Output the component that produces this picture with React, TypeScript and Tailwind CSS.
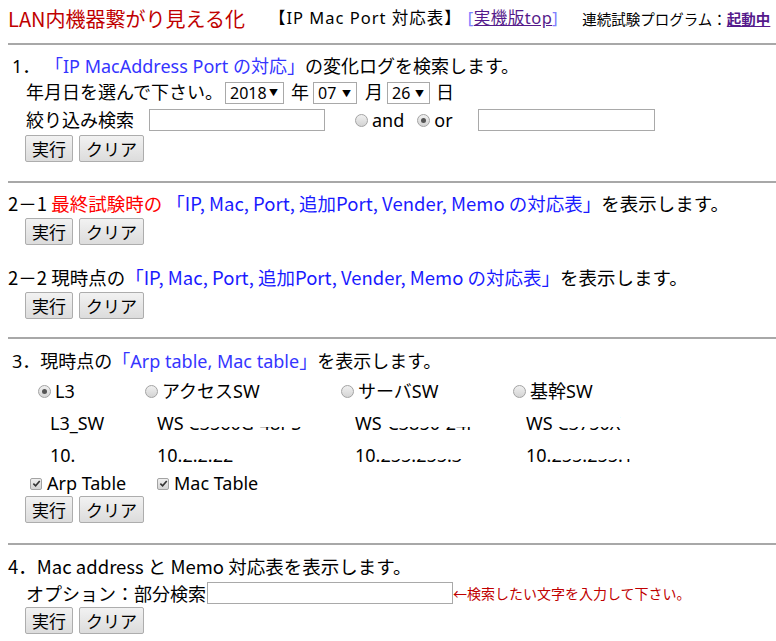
import type { ReactNode } from 'react'

const font = { fontFamily: '"Noto Sans", "Noto Sans CJK JP", sans-serif' }
const narrow = { fontFamily: '"Noto Sans CJK JP", sans-serif' }

function Btn({ children }: { children: ReactNode }) {
  return (
    <button
      type="button"
      className="h-[27px] rounded-[2px] border border-[#adadad] bg-gradient-to-b from-[#f2f2f2] to-[#dcdcdc] px-[6px] text-[17px] leading-none text-black"
      style={narrow}
    >
      {children}
    </button>
  )
}

function Buttons() {
  return (
    <div className="flex gap-[6px] pl-[25px]">
      <Btn>実行</Btn>
      <Btn>クリア</Btn>
    </div>
  )
}

function Radio({ checked = false }: { checked?: boolean }) {
  return (
    <span className="mr-[4px] inline-flex h-[13px] w-[13px] shrink-0 items-center justify-center rounded-full border border-[#a3a3a3] bg-gradient-to-b from-[#f0f0f0] to-[#d4d4d4]">
      {checked && <span className="h-[5px] w-[5px] rounded-full bg-[#555]" />}
    </span>
  )
}

function Check() {
  return (
    <span className="mr-[5px] inline-flex h-[12px] w-[12px] shrink-0 items-center justify-center rounded-[2px] border border-[#a3a3a3] bg-gradient-to-b from-[#f0f0f0] to-[#d4d4d4]">
      <svg viewBox="0 0 10 10" className="h-[9px] w-[9px]">
        <path d="M1.5 5.2 L4 7.6 L8.6 2.2" fill="none" stroke="#333" strokeWidth="1.8" />
      </svg>
    </span>
  )
}

function Select({ value, w }: { value: string; w: string }) {
  return (
    <span
      className={`inline-flex h-[22px] items-center justify-between border border-[#a9a9a9] bg-white pl-[4px] pr-[5px] text-[16px] leading-none ${w}`}
    >
      <span>{value}</span>
      <span className="text-[9px]">▼</span>
    </span>
  )
}

// masked cells: only the lower part of the hidden text shows
function Masked({ lead, rest }: { lead: string; rest: string }) {
  return (
    <span className="whitespace-nowrap">
      {lead}
      <span className="relative inline-block">
        {rest}
        <span className="absolute inset-x-0 top-0 h-[62%] bg-white" />
      </span>
    </span>
  )
}

function Hr() {
  return <div className="ml-[8px] h-[2px] bg-[#a8a8a8]" />
}

export default function App() {
  return (
    <div className="min-h-[641px] w-[776px] overflow-hidden bg-white text-[18px] text-black" style={font}>
      <div className="flex h-[37px] items-center whitespace-nowrap pl-[8px]">
        <span className="text-[20px] text-[#c00000]" style={narrow}>
          LAN内機器繋がり見える化
        </span>
        <span className="ml-[24px] text-[16.5px] tracking-[1px]">【IP Mac Port 対応表】</span>
        <span className="ml-[6px] text-[16.5px] tracking-[0.5px] text-[#8080ff]">
          [<span className="text-[#551a8b] underline">実機版top</span>]
        </span>
        <span className="ml-[24px] text-[14.5px]" style={narrow}>
          連続試験プログラム：<span className="font-bold text-[#551a8b] underline">起動中</span>
        </span>
      </div>
      <div className="pt-[6px]">
        <Hr />
      </div>

      <div className="pt-[8px] pb-[19px]">
        <div className="whitespace-nowrap pl-[12px] leading-[26px]">
          1． <span className="text-[#3535ff]">「IP MacAddress Port の対応」</span>の変化ログを検索します。
        </div>
        <div className="flex h-[27px] items-center whitespace-nowrap pl-[26px]">
          <span className="w-[199px]">年月日を選んで下さい。</span>
          <Select value="2018" w="w-[59px]" />
          <span className="ml-[7px]">年</span>
          <span className="ml-[4px]">
            <Select value="07" w="w-[44px]" />
          </span>
          <span className="ml-[8px]">月</span>
          <span className="ml-[4px]">
            <Select value="26" w="w-[43px]" />
          </span>
          <span className="ml-[6px]">日</span>
        </div>
        <div className="flex h-[28px] items-center whitespace-nowrap pl-[26px]">
          <span className="w-[123px]">絞り込み検索</span>
          <span className="h-[22px] w-[176px] border border-[#a9a9a9]" />
          <span className="ml-[30px] flex items-center">
            <Radio />
            and
          </span>
          <span className="ml-[13px] flex items-center">
            <Radio checked />
            or
          </span>
          <span className="ml-[25px] h-[22px] w-[177px] border border-[#a9a9a9]" />
        </div>
        <div className="pt-[1px]">
          <Buttons />
        </div>
      </div>
      <Hr />

      <div className="pt-[5px] pb-[18px]" style={narrow}>
        <div className="h-[30px] whitespace-nowrap pl-[8px] text-[18.5px] leading-[30px]">
          2－1 <span className="text-[#ff0000]">最終試験時の</span>{' '}
          <span className="text-[#1a1aff]">「IP, Mac, Port, 追加Port, Vender, Memo の対応表」</span>を表示します。
        </div>
        <Buttons />
        <div className="mt-[17px] h-[30px] whitespace-nowrap pl-[8px] text-[18.5px] leading-[30px]">
          2－2 現時点の<span className="text-[#1a1aff]">「IP, Mac, Port, 追加Port, Vender, Memo の対応表」</span>を表示します。
        </div>
        <Buttons />
      </div>
      <Hr />

      <div className="pt-[9px] pb-[20px]">
        <div className="whitespace-nowrap pl-[12px] leading-[26px]">
          3．現時点の<span className="text-[#3535ff]">「Arp table, Mac table」</span>を表示します。
        </div>
        <div className="grid grid-cols-[107px_196px_172px_auto] whitespace-nowrap pl-[38px] pt-[2px]">
          <div className="flex h-[31px] items-center">
            <Radio checked />
            L3
          </div>
          <div className="flex h-[31px] items-center">
            <Radio />
            アクセスSW
          </div>
          <div className="flex h-[31px] items-center">
            <Radio />
            サーバSW
          </div>
          <div className="flex h-[31px] items-center">
            <Radio />
            基幹SW
          </div>
          <div className="h-[32px] pl-[12px] leading-[32px]">L3_SW</div>
          <div className="h-[32px] pl-[12px] leading-[32px]">
            <Masked lead="WS " rest="C3560G-48PS" />
          </div>
          <div className="h-[32px] pl-[14px] leading-[32px]">
            <Masked lead="WS" rest="-C3850-24P" />
          </div>
          <div className="h-[32px] pl-[13px] leading-[32px]">
            <Masked lead="WS " rest="C3750X" />
          </div>
          <div className="h-[32px] pl-[12px] leading-[32px]">10.</div>
          <div className="h-[32px] pl-[12px] leading-[32px]">
            <Masked lead="10." rest="2.2.22" />
          </div>
          <div className="h-[32px] pl-[14px] leading-[32px]">
            <Masked lead="10." rest="255.255.3" />
          </div>
          <div className="h-[32px] pl-[13px] leading-[32px]">
            <Masked lead="10." rest="255.255.1" />
          </div>
        </div>
        <div className="flex h-[25px] items-center pl-[30px]">
          <span className="flex w-[127px] items-center">
            <Check />
            Arp Table
          </span>
          <span className="flex items-center">
            <Check />
            Mac Table
          </span>
        </div>
        <Buttons />
      </div>
      <Hr />

      <div className="pt-[8px]" style={narrow}>
        <div className="h-[26px] whitespace-nowrap pl-[8px] text-[18.5px] leading-[26px]">
          4．Mac address と Memo 対応表を表示します。
        </div>
        <div className="flex h-[28px] items-center whitespace-nowrap pl-[26px]">
          <span className="w-[181px]">オプション：部分検索</span>
          <span className="h-[22px] w-[246px] border border-[#a9a9a9]" />
          <span className="text-[14px] text-[#c00000]">←検索したい文字を入力して下さい。</span>
        </div>
        <Buttons />
      </div>
    </div>
  )
}
